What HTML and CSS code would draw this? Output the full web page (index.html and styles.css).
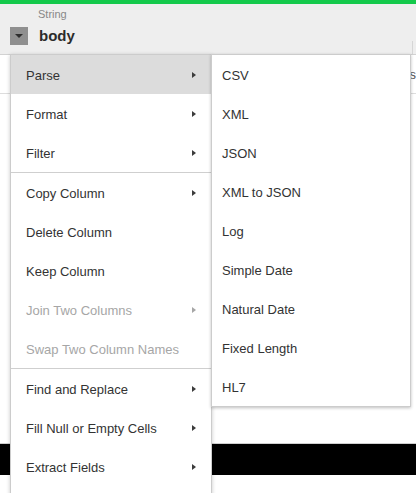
FILE: index.html
```html
<!DOCTYPE html>
<html>
<head>
<meta charset="utf-8">
<link rel="stylesheet" href="styles.css">
</head>
<body>
<div class="page">
  <div class="topbar"></div>
  <div class="header">
    <div class="colhead">
      <div class="coltype">String</div>
      <div class="colname-row">
        <span class="toggle"><span class="toggle-tri"></span></span>
        <span class="colname">body</span>
      </div>
    </div>
    <div class="coldivider"></div>
  </div>
  <div class="subrow">
    <div class="subcell"></div>
    <div class="subcell-next">s</div>
  </div>
  <div class="gridbody"></div>
  <div class="selrow"></div>
  <div class="gridrest"></div>

  <div class="menu main-menu">
    <div class="item active has-sub">Parse<span class="arrow"></span></div>
    <div class="item has-sub">Format<span class="arrow"></span></div>
    <div class="item has-sub">Filter<span class="arrow"></span></div>
    <div class="sep"></div>
    <div class="item has-sub">Copy Column<span class="arrow"></span></div>
    <div class="item">Delete Column</div>
    <div class="item">Keep Column</div>
    <div class="item disabled has-sub">Join Two Columns<span class="arrow"></span></div>
    <div class="item disabled">Swap Two Column Names</div>
    <div class="sep"></div>
    <div class="item has-sub">Find and Replace<span class="arrow"></span></div>
    <div class="item has-sub">Fill Null or Empty Cells<span class="arrow"></span></div>
    <div class="item has-sub">Extract Fields<span class="arrow"></span></div>
    <div class="item"></div>
  </div>

  <div class="menu sub-menu">
    <div class="item">CSV</div>
    <div class="item">XML</div>
    <div class="item">JSON</div>
    <div class="item">XML to JSON</div>
    <div class="item">Log</div>
    <div class="item">Simple Date</div>
    <div class="item">Natural Date</div>
    <div class="item">Fixed Length</div>
    <div class="item">HL7</div>
  </div>
</div>
</body>
</html>
```

FILE: styles.css
```css
html, body {
  margin: 0;
  padding: 0;
  background: #ffffff;
  overflow: hidden;
}
body {
  font-family: "Liberation Sans", Arial, Helvetica, sans-serif;
  color: #333333;
  width: 416px;
  height: 493px;
}
.page {
  position: relative;
  width: 416px;
  height: 493px;
  overflow: hidden;
}
.topbar {
  height: 4px;
  background: #14c94b;
}
.header {
  height: 50px;
  background: #eeeeee;
  border-bottom: 1px solid #d2d2d2;
  display: flex;
}
.colhead {
  width: 402px;
  padding-left: 10px;
  padding-top: 3px;
  box-sizing: content-box;
}
.coldivider {
  width: 1px;
  margin-top: 37px;
  background: #d6d6d6;
}
.coltype {
  font-size: 11px;
  line-height: 14px;
  color: #888888;
  padding-left: 28px;
}
.colname-row {
  display: flex;
  align-items: center;
  margin-top: 6px;
  height: 18px;
}
.toggle {
  width: 18px;
  height: 18px;
  background: #8f8f8f;
  display: flex;
  align-items: center;
  justify-content: center;
}
.toggle-tri {
  width: 0;
  height: 0;
  border-left: 4px solid transparent;
  border-right: 4px solid transparent;
  border-top: 4px solid #2e2e2e;
}
.colname {
  font-size: 15px;
  font-weight: bold;
  color: #2b2b2b;
  margin-left: 11px;
  line-height: 18px;
}
.subrow {
  height: 38px;
  border-bottom: 1px solid #dddddd;
  display: flex;
}
.subcell {
  width: 411px;
}
.subcell-next {
  font-size: 13px;
  line-height: 40px;
  color: #555555;
  margin-left: -1px;
}
.gridbody {
  height: 349px;
  border-bottom: 1px solid #cfcfcf;
}
.selrow {
  height: 31px;
  background: #000000;
}
.gridrest {
  height: 20px;
}
.menu {
  position: absolute;
  background: #ffffff;
  border: 1px solid #cccccc;
  box-sizing: border-box;
}
.main-menu {
  left: 10px;
  top: 54px;
  width: 202px;
  height: 460px;
  box-shadow: 0 1px 4px rgba(0, 0, 0, 0.22);
}
.sub-menu {
  left: 211px;
  top: 54px;
  width: 200px;
  box-shadow: 0 1px 3px rgba(0, 0, 0, 0.25);
}
.item {
  height: 38px;
  padding-top: 1px;
  line-height: 39px;
  font-size: 13px;
  color: #333333;
  white-space: nowrap;
  position: relative;
}
.main-menu .item {
  padding-left: 15px;
}
.sub-menu .item {
  padding-left: 10px;
}
.item.active {
  background: #dcdcdc;
}
.item.disabled {
  color: #a6a6a6;
}
.arrow {
  position: absolute;
  right: 15px;
  top: 17px;
  width: 0;
  height: 0;
  border-top: 3.5px solid transparent;
  border-bottom: 3.5px solid transparent;
  border-left: 4px solid #3c3c3c;
}
.item.disabled .arrow {
  border-left-color: #a6a6a6;
}
.sep {
  height: 1px;
  background: #cfcfcf;
}
```
